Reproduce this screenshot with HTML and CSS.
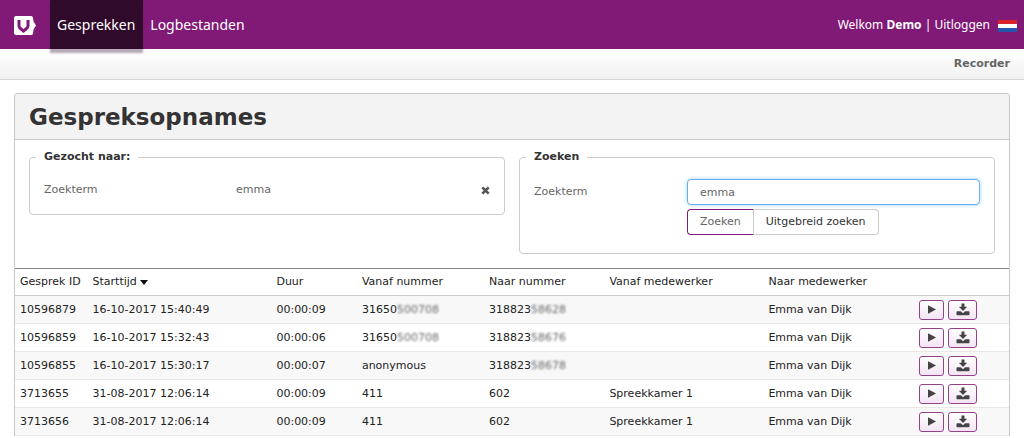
FILE: index.html
```html
<!DOCTYPE html>
<html lang="nl">
<head>
<meta charset="utf-8">
<meta name="viewport" content="width=device-width, initial-scale=1">
<title>Gespreksopnames</title>
<link rel="stylesheet" href="styles.css">
</head>
<body>
<svg class="sprite" aria-hidden="true">
  <symbol id="play" viewBox="0 0 8 9"><path d="M0 0.3 8 4.5 0 8.7z"/></symbol>
  <symbol id="download" viewBox="0 0 14 13"><path d="M5.500 0.500h3v3.200h2.700L7 7.900 2.800 3.700h2.700z"/><path d="M1.200 8.200h3.600L7 10.200l2.200-2h3.600q.7 0 .7.7v2.600q0 .7-.7.7H1.200q-.7 0-.7-.7V8.900q0-.7.7-.7z"/></symbol>
</svg>
<header class="topbar">
  <a class="brand" href="#" aria-label="Home">
    <svg width="22" height="20" viewBox="0 0 22 20"><path d="M2 0h15q1.500 0 2 1.600L19.500 5.500 22 9.500l-2.500 4-.5 3.900Q18.500 19 17 19H2Q0 19 0 17V2Q0 0 2 0z" fill="#fff"/><path d="M5 4v6q0 1.500 1.500 2.500L9.500 15l3-2.500Q14 11.500 14 10V4" fill="none" stroke="#811a76" stroke-width="3"/></svg>
  </a>
  <nav class="nav">
    <a class="nav-link active" href="#">Gesprekken</a>
    <a class="nav-link" href="#">Logbestanden</a>
  </nav>
  <div class="user">
    <span>Welkom <b>Demo</b> | <a href="#">Uitloggen</a></span>
    <a class="flag" href="#" aria-label="Nederlands"></a>
  </div>
</header>
<div class="subbar"><a href="#">Recorder</a></div>
<main class="panel">
  <h1 class="panel-title">Gespreksopnames</h1>
  <div class="filters">
    <fieldset class="box">
      <legend>Gezocht naar:</legend>
      <div class="found">
        <span>Zoekterm</span>
        <span>emma</span>
        <button class="remove" type="button" aria-label="Verwijderen"><svg width="9" height="9" viewBox="0 0 9 9"><path d="M1.300 1.300 7.700 7.700M7.700 1.300 1.300 7.700" stroke="#555" stroke-width="2.600"/></svg></button>
      </div>
    </fieldset>
    <fieldset class="box">
      <legend>Zoeken</legend>
      <form class="search">
        <label for="term">Zoekterm</label>
        <input id="term" type="text" value="emma">
        <div class="buttons">
          <button class="btn primary" type="button">Zoeken</button>
          <button class="btn" type="button">Uitgebreid zoeken</button>
        </div>
      </form>
    </fieldset>
  </div>
  <table class="calls">
    <colgroup><col class="c-id"><col class="c-start"><col class="c-duration"><col class="c-from"><col class="c-to"><col class="c-from-user"><col class="c-to-user"><col></colgroup>
    <thead>
      <tr><th>Gesprek ID</th><th>Starttijd <span class="caret"></span></th><th>Duur</th><th>Vanaf nummer</th><th>Naar nummer</th><th>Vanaf medewerker</th><th>Naar medewerker</th><th></th></tr>
    </thead>
    <tbody>
      <tr><td>10596879</td><td>16-10-2017 15:40:49</td><td>00:00:09</td><td>31650<span class="masked">500708</span></td><td>318823<span class="masked">58628</span></td><td></td><td>Emma van Dijk</td><td><div class="actions"><button class="icon-btn" type="button" aria-label="Afspelen"><svg width="8" height="9"><use href="#play"/></svg></button><button class="icon-btn wide" type="button" aria-label="Downloaden"><svg width="14" height="13"><use href="#download"/></svg></button></div></td></tr>
      <tr><td>10596859</td><td>16-10-2017 15:32:43</td><td>00:00:06</td><td>31650<span class="masked">500708</span></td><td>318823<span class="masked">58676</span></td><td></td><td>Emma van Dijk</td><td><div class="actions"><button class="icon-btn" type="button" aria-label="Afspelen"><svg width="8" height="9"><use href="#play"/></svg></button><button class="icon-btn wide" type="button" aria-label="Downloaden"><svg width="14" height="13"><use href="#download"/></svg></button></div></td></tr>
      <tr><td>10596855</td><td>16-10-2017 15:30:17</td><td>00:00:07</td><td>anonymous</td><td>318823<span class="masked">58678</span></td><td></td><td>Emma van Dijk</td><td><div class="actions"><button class="icon-btn" type="button" aria-label="Afspelen"><svg width="8" height="9"><use href="#play"/></svg></button><button class="icon-btn wide" type="button" aria-label="Downloaden"><svg width="14" height="13"><use href="#download"/></svg></button></div></td></tr>
      <tr><td>3713655</td><td>31-08-2017 12:06:14</td><td>00:00:09</td><td>411</td><td>602</td><td>Spreekkamer 1</td><td>Emma van Dijk</td><td><div class="actions"><button class="icon-btn" type="button" aria-label="Afspelen"><svg width="8" height="9"><use href="#play"/></svg></button><button class="icon-btn wide" type="button" aria-label="Downloaden"><svg width="14" height="13"><use href="#download"/></svg></button></div></td></tr>
      <tr><td>3713656</td><td>31-08-2017 12:06:14</td><td>00:00:09</td><td>411</td><td>602</td><td>Spreekkamer 1</td><td>Emma van Dijk</td><td><div class="actions"><button class="icon-btn" type="button" aria-label="Afspelen"><svg width="8" height="9"><use href="#play"/></svg></button><button class="icon-btn wide" type="button" aria-label="Downloaden"><svg width="14" height="13"><use href="#download"/></svg></button></div></td></tr>
    </tbody>
  </table>
</main>
</body>
</html>
```

FILE: styles.css
```css
* { box-sizing: border-box; }
body {
  margin: 0;
  background: #fff;
  color: #222;
  font: 11px/16px "DejaVu Sans", Verdana, sans-serif;
}
a { color: inherit; text-decoration: none; }
button, input { font: inherit; color: inherit; }
.sprite { display: none; }

.topbar {
  display: flex;
  height: 49px;
  background: #811a76;
  color: #fff;
}
.brand { display: flex; align-items: center; padding: 2px 14px 0; }
.nav { display: flex; font-family: "Noto Sans", sans-serif; font-size: 14px; }
.nav-link { display: flex; align-items: center; height: 49px; padding: 0 8px 0 7px; }
.nav-link.active { background: #300a2b; box-shadow: 0 4px 2px rgba(48, 10, 43, .35); }
.user {
  display: flex;
  align-items: center;
  gap: 8px;
  margin-left: auto;
  padding-right: 7px;
  font-family: "Noto Sans", sans-serif;
  font-size: 12px;
}
.flag {
  width: 19px;
  height: 12px;
  margin-top: 2px;
  border-radius: 1px;
  background: linear-gradient(#d8232f 33%, #fff 33% 67%, #2456b0 67%);
}
.subbar {
  display: flex;
  justify-content: flex-end;
  align-items: center;
  height: 31px;
  padding: 0 14px;
  border-bottom: 1px solid #d5d5d5;
  background: linear-gradient(#fff, #f1f1f1);
  color: #666;
  font-weight: bold;
}

.panel {
  margin: 13px 14px 0;
  border: 1px solid #c8c8c8;
  border-bottom: 0;
  border-radius: 4px 4px 0 0;
}
.panel-title {
  margin: 0;
  padding: 9px 14px 7px;
  border-bottom: 1px solid #ccc;
  border-radius: 4px 4px 0 0;
  background: #f3f3f3;
  color: #333;
  font-size: 23px;
  line-height: 29px;
}
.filters {
  display: grid;
  grid-template-columns: 1fr 1fr;
  align-items: start;
  gap: 14px;
  padding: 9px 14px 14px;
}
.box {
  min-width: 0;
  margin: 0;
  padding: 0 14px;
  border: 1px solid #ccc;
  border-radius: 4px;
  color: #666;
}
.box legend { margin-left: -8px; padding: 0 8px; color: #333; font-weight: bold; }
.found {
  display: grid;
  grid-template-columns: 192px 1fr auto;
  align-items: center;
  padding: 17px 0 16px;
}
.remove { display: flex; padding: 0; border: 0; background: none; }
.search {
  display: grid;
  grid-template-columns: 153px 1fr;
  align-items: center;
  row-gap: 4px;
  padding: 14px 0 18px;
}
.search input {
  width: 100%;
  height: 26px;
  padding: 0 12px;
  border: 1px solid #66afe9;
  border-radius: 4px;
  outline: 0;
  background: #fff;
  box-shadow: 0 0 4px #a5d4f7;
}
.buttons { display: flex; grid-column: 2; }
.btn {
  height: 26px;
  padding: 0 12px;
  border: 1px solid #ccc;
  border-left: 0;
  border-radius: 0 4px 4px 0;
  background: #fff;
  color: #333;
}
.btn.primary {
  border: 1px solid #811a76;
  border-right-color: #ccc;
  border-radius: 4px 0 0 4px;
  color: #666;
}

.calls {
  width: 100%;
  table-layout: fixed;
  border-collapse: collapse;
  border-top: 1px solid #888;
}
.c-id { width: 7.3%; }
.c-start { width: 18.5%; }
.c-duration { width: 8.6%; }
.c-from { width: 12.8%; }
.c-to { width: 12.1%; }
.c-from-user { width: 16%; }
.c-to-user { width: 15.2%; }
.calls th, .calls td {
  height: 28px;
  padding: 0 0 0 5px;
  border-bottom: 1px solid #e8e8e8;
  font-weight: normal;
  text-align: left;
  white-space: nowrap;
}
.calls th { height: 27px; border-bottom-color: #ccc; }
.calls tbody tr:nth-child(odd) { background: #f8f8f8; }
.caret {
  display: inline-block;
  border: 4px solid transparent;
  border-top: 5px solid #111;
  border-bottom: 0;
}
.masked { color: #666; filter: blur(1px); }
.actions { display: flex; gap: 4px; }
.icon-btn {
  display: flex;
  align-items: center;
  justify-content: center;
  width: 25px;
  height: 20px;
  padding: 0;
  border: 1px solid #954189;
  border-radius: 3px;
  background: linear-gradient(#fff, #f3e4f4);
  fill: #444;
}
.icon-btn.wide { width: 29px; }
```
